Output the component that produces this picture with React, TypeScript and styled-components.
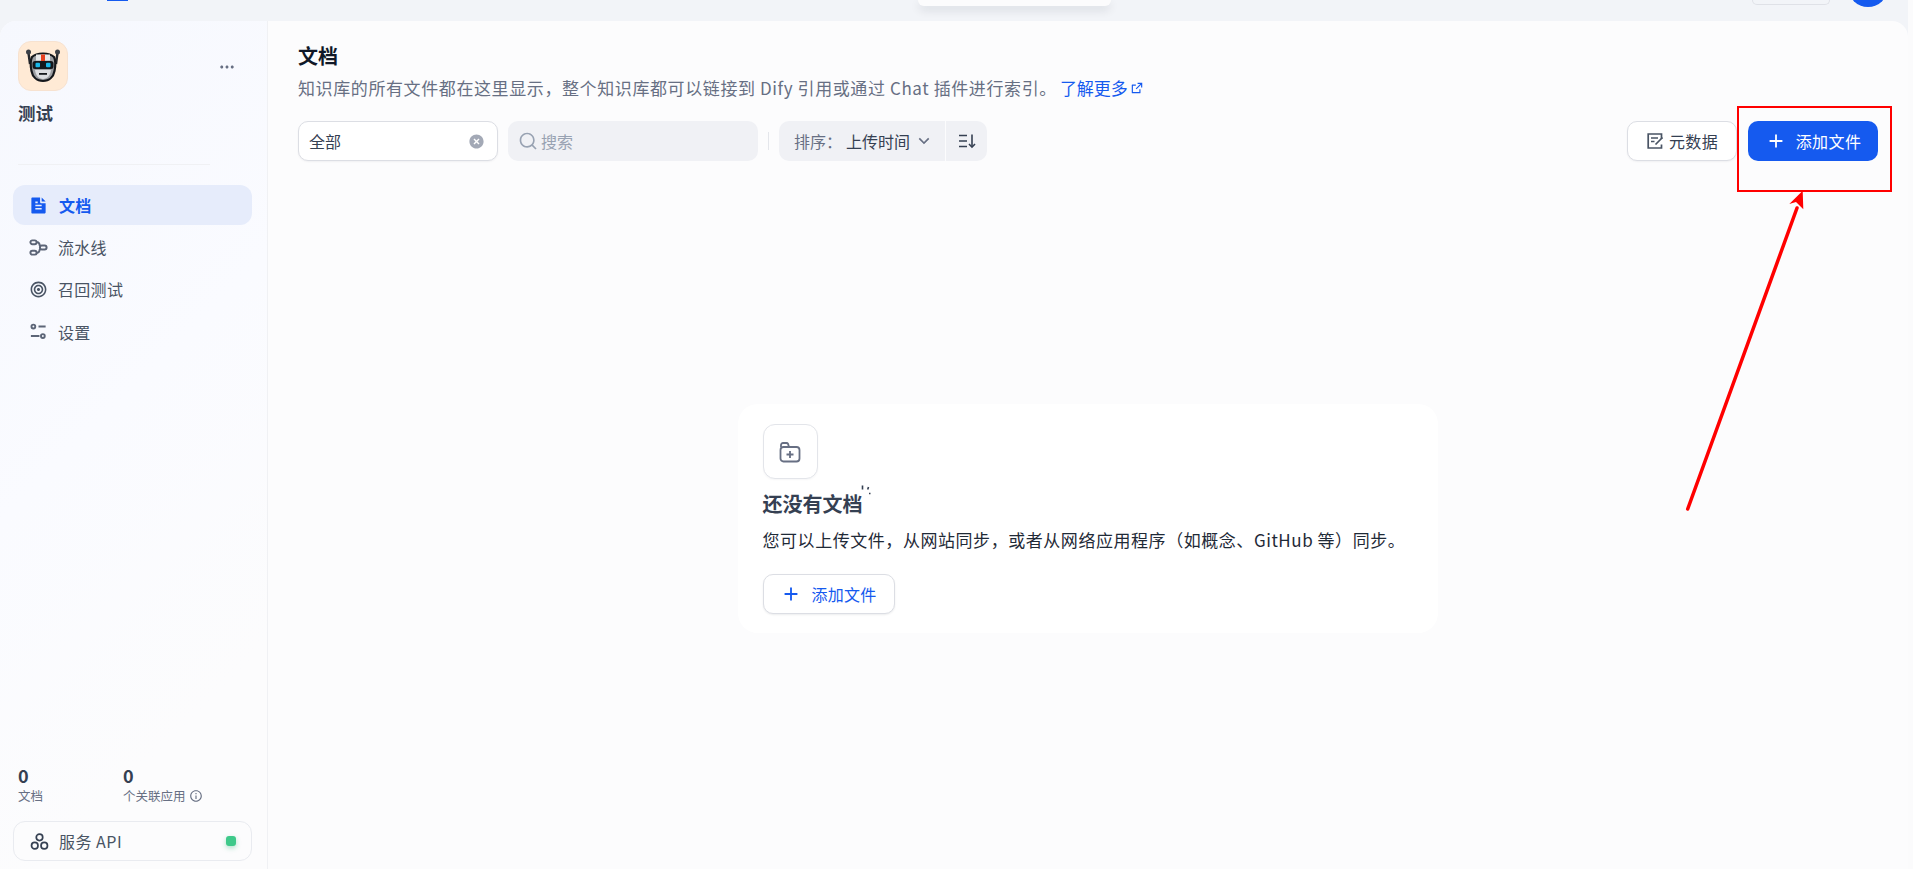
import { createGlobalStyle, styled } from "styled-components"
import { RiAddLine, RiArrowDownSLine, RiCloseCircleFill, RiExternalLinkLine, RiFileTextFill, RiFocus2Line, RiInformationLine, RiMoreFill, RiSearchLine } from "react-icons/ri"

const GlobalStyle = createGlobalStyle`
  html, body { margin: 0; padding: 0; height: 100%; overflow: hidden; }
  body { background: #f2f4f7; font-family: "Noto Sans CJK SC", "Noto Sans", sans-serif; color: #354052; }
  * { box-sizing: border-box; }
`

const Page = styled.div`
  position: relative;
  width: 1913px;
  height: 869px;
  display: flex;
  flex-direction: column;
  overflow: hidden;
  background: #f2f4f8;
  border-right: 5px solid #fbfbfc;
`

const TopBar = styled.header`
  height: 21px;
  flex: none;
  display: flex;
  align-items: flex-start;
  padding-left: 107px;
  padding-right: 20px;
`

const TabMark = styled.span`
  width: 21px;
  height: 1px;
  background: #155aef;
`

const TopPill = styled.div`
  width: 193px;
  height: 6px;
  margin-left: 790px;
  background: #fcfcfd;
  border-radius: 0 0 12px 12px;
  box-shadow: 0 4px 10px rgba(16, 24, 40, 0.12);
`

const TopButton = styled.div`
  width: 78px;
  height: 5px;
  margin-left: auto;
  border: 1px solid #dfe1e7;
  border-top: 0;
  border-radius: 0 0 10px 10px;
`

const Avatar = styled.div`
  width: 40px;
  height: 40px;
  margin-top: -33px;
  margin-left: 18px;
  border-radius: 50%;
  background: #155aef;
`

const Panel = styled.main`
  flex: 1;
  min-height: 0;
  display: flex;
  background: #fcfcfd;
  border-radius: 16px 16px 0 0;
  overflow: hidden;
`

const Sidebar = styled.aside`
  width: 268px;
  flex: none;
  display: flex;
  flex-direction: column;
  border-right: 1px solid #f0f1f4;
  background: linear-gradient(135deg, #f6f8fe 0%, #fafbff 45%, #fcfcfd 80%);
  padding: 20px 15px 8px 13px;
`

const SideHead = styled.div`
  display: flex;
  justify-content: space-between;
  align-items: flex-start;
  padding: 0 16px 0 5px;
`

const AppIcon = styled.div`
  width: 50px;
  height: 50px;
  border-radius: 13px;
  background: #ffead5;
  border: 1px solid #f7e2d0;
  display: flex;
  align-items: center;
  justify-content: center;
`

const MoreIcon = styled(RiMoreFill)`
  margin-top: 17px;
  font-size: 18px;
  color: #676f83;
`

const AppName = styled.div`
  margin: 10px 0 0 5px;
  font-size: 17.5px;
  line-height: 24px;
  font-weight: 700;
  color: #354052;
`

const SideRule = styled.hr`
  width: 192px;
  margin: 39px 0 20px 5px;
  border: 0;
  border-top: 1px solid #f0f1f4;
`

const Nav = styled.nav`
  display: flex;
  flex-direction: column;
  gap: 2.2px;
`

const NavItem = styled.a<{ $active?: boolean }>`
  height: 40px;
  display: flex;
  align-items: center;
  gap: ${(p) => (p.$active ? "11px" : "10px")};
  padding-left: 16px;
  border-radius: 12px;
  font-size: 16px;
  font-weight: ${(p) => (p.$active ? 600 : 400)};
  color: ${(p) => (p.$active ? "#155aef" : "#495464")};
  background: ${(p) => (p.$active ? "#e6ecfb" : "transparent")};
  letter-spacing: 0.3px;

  svg { flex: none; width: 19px; height: 19px; }
`

const Stats = styled.div`
  margin-top: auto;
  display: flex;
  padding-left: 5px;
`

const Stat = styled.div`
  width: 105px;
`

const StatValue = styled.div`
  font-size: 18px;
  line-height: 22px;
  font-weight: 700;
  color: #354052;
`

const StatLabel = styled.div`
  margin-top: 1px;
  display: flex;
  align-items: center;
  gap: 3px;
  font-size: 12.5px;
  line-height: 18px;
  color: #676f83;
  white-space: nowrap;

  svg { font-size: 14px; }
`

const ApiBox = styled.div`
  margin-top: 16px;
  height: 40px;
  display: flex;
  align-items: center;
  gap: 10px;
  padding: 0 15px 0 16px;
  border: 1px solid #e9ebf0;
  border-radius: 12px;
  background: #fcfcfd;
  font-size: 16px;
  color: #495464;
  letter-spacing: 0.5px;
`

const StatusDot = styled.span`
  margin-left: auto;
  width: 10px;
  height: 10px;
  border-radius: 3px;
  background: #3ec98a;
  box-shadow: 0 2px 5px rgba(23, 178, 106, 0.35);
`

const Content = styled.section`
  flex: 1;
  min-width: 0;
  display: flex;
  flex-direction: column;
  padding: 19px 30px 0;
`

const Title = styled.h1`
  margin: 0;
  font-size: 20px;
  line-height: 32px;
  font-weight: 700;
  color: #101828;
`

const Subtitle = styled.p`
  margin: 0;
  display: flex;
  align-items: center;
  font-size: 17px;
  letter-spacing: 0.6px;
  line-height: 32px;
  color: #676f83;
  white-space: pre;
`

const DocLink = styled.a`
  display: inline-flex;
  align-items: center;
  gap: 2px;
  color: #155aef;
  margin-left: 3px;
  letter-spacing: 0;

  svg { font-size: 14px; }
`

const Toolbar = styled.div`
  margin-top: 17px;
  display: flex;
  align-items: center;
  height: 40px;
`

const SelectBox = styled.div`
  width: 200px;
  height: 40px;
  display: flex;
  align-items: center;
  justify-content: space-between;
  padding: 0 12px 0 10px;
  border: 1px solid #dcdee4;
  border-radius: 10px;
  background: #fff;
  box-shadow: 0 1px 2px rgba(16, 24, 40, 0.05);
  font-size: 16px;
  color: #354052;

  svg { font-size: 17px; color: #a3a9b6; }
`

const SearchBox = styled.div`
  width: 250px;
  height: 40px;
  margin-left: 10px;
  display: flex;
  align-items: center;
  gap: 3px;
  padding: 0 10px;
  border-radius: 10px;
  background: #f0f1f5;
  font-size: 16px;
  color: #98a2b2;

  svg { font-size: 20px; }
`

const ToolDivider = styled.span`
  width: 1px;
  height: 18px;
  margin: 0 10px;
  background: #e4e6eb;
`

const SortGroup = styled.div`
  height: 40px;
  display: flex;
  border-radius: 10px;
  overflow: hidden;
  background: #f0f1f5;
  font-size: 16px;
`

const SortButton = styled.div`
  width: 167px;
  display: flex;
  align-items: center;
  padding-left: 15px;
  border-right: 1px solid #fcfcfd;
  color: #354052;

  > span:first-child { color: #676f83; margin-right: 4px; }
  svg { margin-left: 4px; font-size: 20px; color: #676f83; }
`

const OrderButton = styled.div`
  width: 41px;
  display: flex;
  align-items: center;
  justify-content: center;
`

const Actions = styled.div`
  margin-left: auto;
  display: flex;
  gap: 11px;
`

const MetaButton = styled.button`
  width: 110px;
  height: 40px;
  display: flex;
  align-items: center;
  justify-content: center;
  gap: 5px;
  border: 1px solid #dcdee4;
  border-radius: 10px;
  background: #fff;
  font: inherit;
  font-size: 16px;
  letter-spacing: 0.3px;
  color: #354052;
  box-shadow: 0 1px 2px rgba(16, 24, 40, 0.05);
`

const AddButton = styled.button`
  width: 130px;
  height: 40px;
  display: flex;
  align-items: center;
  justify-content: center;
  gap: 9px;
  border: 0;
  border-radius: 10px;
  background: #155aef;
  font: inherit;
  font-size: 16px;
  letter-spacing: 0.4px;
  color: #fff;

  svg { font-size: 22px; }
`

const EmptyArea = styled.div`
  flex: 1;
  display: flex;
  align-items: center;
  justify-content: center;
  padding-top: 7px;
`

const EmptyCard = styled.div`
  width: 700px;
  height: 229px;
  margin-right: 1px;
  padding: 20px 25px;
  border-radius: 20px;
  background: #fff;
`

const FolderBox = styled.div`
  width: 55px;
  height: 55px;
  display: flex;
  align-items: center;
  justify-content: center;
  border: 1px solid #e3e5ea;
  border-radius: 12px;
  background: #fff;
  box-shadow: 0 1px 2px rgba(16, 24, 40, 0.04);
`

const EmptyTitle = styled.div`
  position: relative;
  width: max-content;
  margin-top: 10px;
  font-size: 20px;
  line-height: 30px;
  font-weight: 700;
  color: #354052;
`

const Sparks = styled.svg`
  position: absolute;
  left: 96px;
  top: -8px;
`

const EmptyText = styled.p`
  margin: 8px 0 0;
  font-size: 17px;
  letter-spacing: 0.55px;
  line-height: 26px;
  color: #1f2a37;
  white-space: nowrap;
`

const OutlineButton = styled.button`
  width: 132px;
  height: 40px;
  margin-top: 21px;
  display: flex;
  align-items: center;
  justify-content: center;
  gap: 9px;
  border: 1px solid #dcdee4;
  border-radius: 10px;
  background: #fff;
  font: inherit;
  font-size: 16px;
  letter-spacing: 0.3px;
  color: #155aef;
  box-shadow: 0 1px 2px rgba(16, 24, 40, 0.08);

  svg { font-size: 22px; }
`

const RedFrame = styled.div`
  position: absolute;
  left: 1737px;
  top: 106px;
  width: 155px;
  height: 86px;
  border: 2.5px solid #ff0000;
`

const RedArrow = styled.svg`
  position: absolute;
  left: 1670px;
  top: 180px;
`

function PipelineIcon() {
  return (
    <svg viewBox="0 0 20 20" fill="none" stroke="#5c6577" strokeWidth="2.100">
      <rect x="1.500" y="2.500" width="6.500" height="4" rx="2" />
      <rect x="11.500" y="8" width="7" height="4" rx="2" />
      <rect x="1.500" y="13.500" width="6.500" height="4" rx="2" />
      <path d="M8 4.500h1c1.500 0 2 1 2.500 4M8 15.500h1c1.500 0 2-1 2.500-4" />
    </svg>
  )
}

function SettingsIcon() {
  return (
    <svg viewBox="0 0 20 20" fill="none" stroke="#5c6577" strokeWidth="2">
      <circle cx="4.600" cy="4.800" r="2" />
      <circle cx="14.600" cy="14.800" r="2" />
      <path d="M10 4.800h7.500M2 14.800h9" />
    </svg>
  )
}

function ApiIcon() {
  return (
    <svg width="19" height="19" viewBox="0 0 20 20" fill="none" stroke="#354052" strokeWidth="1.800">
      <circle cx="10" cy="5.600" r="3.400" />
      <circle cx="5" cy="14.400" r="3.400" />
      <circle cx="15" cy="14.400" r="3.400" />
    </svg>
  )
}

function OrderIcon() {
  return (
    <svg width="18" height="18" viewBox="0 0 18 18" fill="none" stroke="#354052" strokeWidth="1.600">
      <path d="M1 3.500h8M1 9h8M1 14.500h8M14 2.500v12.500" />
      <path d="M11 12l3 3.200 3-3.200" />
    </svg>
  )
}

function MetaIcon() {
  return (
    <svg width="18" height="18" viewBox="0 0 18 18" fill="none" stroke="#495464" strokeWidth="1.700">
      <path d="M15.500 7V2H2.200v14h13.300v-3.500" />
      <path d="M5 6h7M5 9.500h3.500" />
      <path d="M9.500 12.500l7-7" />
    </svg>
  )
}

function FolderAddIcon() {
  return (
    <svg width="24" height="24" viewBox="0 0 24 24" fill="none" stroke="#676f83" strokeWidth="1.800" strokeLinejoin="round">
      <path d="M3 7V5a2 2 0 012-2h3.500c.7 0 1.300.4 1.600 1L11 7" />
      <rect x="2.500" y="7" width="19" height="14.500" rx="3" />
      <path d="M12 11v7M8.500 14.500h7" />
    </svg>
  )
}

function RobotIcon() {
  return (
    <svg width="36" height="36" viewBox="0 0 36 36">
      <path d="M3.500 5l1.500 11M32.500 5L31 16" stroke="#26282d" strokeWidth="2.400" />
      <circle cx="3.500" cy="4" r="2.500" fill="#3b3f46" />
      <circle cx="32.500" cy="4" r="2.500" fill="#3b3f46" />
      <path d="M7 9c2.500-2.500 6-3.500 11-3.500S26.500 6.500 29 9c1.500 3 1.500 9 .5 14-1 5.500-5 10-11.500 10S7.500 28.500 6.500 23c-1-5-1-11 .5-14z" fill="#9b9da1" stroke="#15171b" strokeWidth="2.200" />
      <rect x="11" y="6.500" width="14" height="6" fill="#e9e9ea" />
      <rect x="16" y="6.500" width="4" height="6.500" fill="#e8401f" />
      <rect x="7.500" y="13" width="21" height="8" rx="2.500" fill="#14171c" />
      <rect x="10.500" y="14.800" width="4.500" height="4.500" rx="1" fill="#19b7ea" />
      <rect x="21" y="14.800" width="4.500" height="4.500" rx="1" fill="#19b7ea" />
      <path d="M10 22h16c-.5 5-3.500 9-8 9s-7.500-4-8-9z" fill="#dcdde0" />
      <rect x="14" y="25" width="8" height="1.800" fill="#17191d" />
    </svg>
  )
}

export default function App() {
  return (
    <Page>
      <GlobalStyle />
      <TopBar>
        <TabMark />
        <TopPill />
        <TopButton />
        <Avatar />
      </TopBar>
      <Panel>
        <Sidebar>
          <SideHead>
            <AppIcon><RobotIcon /></AppIcon>
            <MoreIcon />
          </SideHead>
          <AppName>测试</AppName>
          <SideRule />
          <Nav>
            <NavItem $active><RiFileTextFill />文档</NavItem>
            <NavItem><PipelineIcon />流水线</NavItem>
            <NavItem><RiFocus2Line color="#495464" />召回测试</NavItem>
            <NavItem><SettingsIcon />设置</NavItem>
          </Nav>
          <Stats>
            <Stat>
              <StatValue>0</StatValue>
              <StatLabel>文档</StatLabel>
            </Stat>
            <Stat>
              <StatValue>0</StatValue>
              <StatLabel>个关联应用<RiInformationLine /></StatLabel>
            </Stat>
          </Stats>
          <ApiBox><ApiIcon />服务 API<StatusDot /></ApiBox>
        </Sidebar>
        <Content>
          <Title>文档</Title>
          <Subtitle>
            知识库的所有文件都在这里显示，整个知识库都可以链接到 Dify 引用或通过 Chat 插件进行索引。
            <DocLink>了解更多<RiExternalLinkLine /></DocLink>
          </Subtitle>
          <Toolbar>
            <SelectBox>全部<RiCloseCircleFill /></SelectBox>
            <SearchBox><RiSearchLine />搜索</SearchBox>
            <ToolDivider />
            <SortGroup>
              <SortButton><span>排序：</span><span>上传时间</span><RiArrowDownSLine /></SortButton>
              <OrderButton><OrderIcon /></OrderButton>
            </SortGroup>
            <Actions>
              <MetaButton><MetaIcon />元数据</MetaButton>
              <AddButton><RiAddLine />添加文件</AddButton>
            </Actions>
          </Toolbar>
          <EmptyArea>
            <EmptyCard>
              <FolderBox><FolderAddIcon /></FolderBox>
              <EmptyTitle>
                还没有文档
                <Sparks width="14" height="16" viewBox="0 0 14 16" fill="none" stroke="#354052" strokeWidth="1.600">
                  <path d="M3.500 4.500v4M9.500 6l-.8 2.500M10 12.500h1.500" />
                </Sparks>
              </EmptyTitle>
              <EmptyText>您可以上传文件，从网站同步，或者从网络应用程序（如概念、GitHub 等）同步。</EmptyText>
              <OutlineButton><RiAddLine />添加文件</OutlineButton>
            </EmptyCard>
          </EmptyArea>
        </Content>
      </Panel>
      <RedFrame />
      <RedArrow width="140" height="340" viewBox="0 0 140 340" fill="none">
        <path d="M17.700 329L127 28" stroke="#ff0000" strokeWidth="3.500" strokeLinecap="round" />
        <path d="M132.700 10.700L133.300 29.300L126 22L119.300 24z" fill="#ff0000" />
      </RedArrow>
    </Page>
  )
}
